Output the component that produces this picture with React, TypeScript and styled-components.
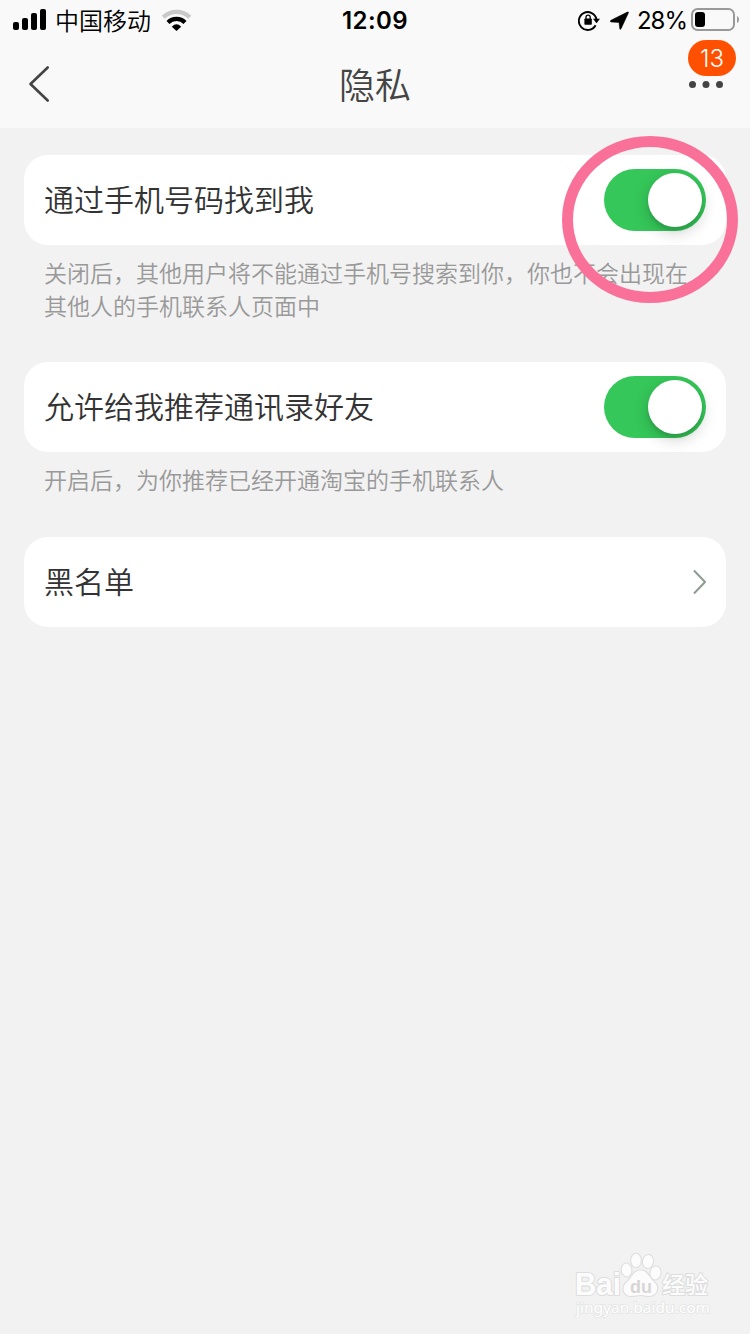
import React from "react";
import styled, { createGlobalStyle } from "styled-components";

const GlobalStyle = createGlobalStyle`
  * { box-sizing: border-box; }
  body {
    margin: 0;
    background: #f2f2f2;
    font-family: Inter, "Noto Sans CJK SC", sans-serif;
  }
`;

const Screen = styled.main`
  position: relative;
  width: 750px;
  height: 1334px;
  overflow: hidden;
  background: #f2f2f2;
`;

const Header = styled.header`
  height: 128px;
  background: #f9f9f9;
`;

const StatusBar = styled.div`
  display: grid;
  grid-template-columns: 1fr auto 1fr;
  align-items: center;
  height: 40px;
  padding: 0 11px 0 13px;
  color: #000;
`;

const StatusGroup = styled.div<{ $end?: boolean }>`
  display: flex;
  align-items: center;
  justify-content: ${(p) => (p.$end ? "flex-end" : "flex-start")};
  height: 40px;
  svg { display: block; flex: none; }
`;

const Carrier = styled.span`
  margin: 0 11px 0 8px;
  font: 350 24px/40px "Noto Sans CJK SC", sans-serif;
  white-space: nowrap;
`;

const Clock = styled.time`
  padding: 2px 2px 0 0;
  font: 600 24px/38px Inter, sans-serif;
  letter-spacing: 0.4px;
  white-space: nowrap;
`;

const Percent = styled.span`
  margin: 0 4px 0 8px;
  padding-top: 2px;
  font: 400 24px/38px Inter, sans-serif;
  letter-spacing: -1px;
`;

const NavBar = styled.nav`
  display: grid;
  grid-template-columns: 1fr auto 1fr;
  align-items: center;
  height: 88px;
  padding: 0 27px;
`;

const NavButton = styled.button<{ $end?: boolean }>`
  position: relative;
  justify-self: ${(p) => (p.$end ? "end" : "start")};
  display: flex;
  padding: 0;
  border: 0;
  background: none;
`;

const Title = styled.h1`
  margin: 0;
  padding-bottom: 2px;
  color: #444;
  font: 350 36px/86px "Noto Sans CJK SC", sans-serif;
`;

const Badge = styled.span`
  position: absolute;
  right: -13px;
  bottom: 12px;
  width: 48px;
  height: 36px;
  border-radius: 18px;
  background: #ff5000;
  color: #fff;
  font: 350 24px/38px Inter, sans-serif;
  text-align: center;
`;

const Content = styled.div`
  padding: 27px 24px 0;
`;

const Section = styled.section<{ $gap?: number }>`
  margin-bottom: ${(p) => p.$gap ?? 0}px;
`;

const Card = styled.div`
  display: flex;
  align-items: center;
  justify-content: space-between;
  height: 90px;
  padding: 0 20px;
  border-radius: 24px;
  background: #fff;
`;

const Label = styled.span`
  padding-bottom: 4px;
  color: #333;
  font: 350 30px/44px "Noto Sans CJK SC", sans-serif;
`;

const Hint = styled.p`
  margin: 0;
  padding: 11px 20px 1px;
  color: #999;
  font: 350 23px/33px "Noto Sans CJK SC", sans-serif;
  white-space: nowrap;
`;

const Track = styled.button`
  display: flex;
  justify-content: flex-end;
  width: 102px;
  height: 62px;
  padding: 4px;
  border: 0;
  border-radius: 31px;
  background: #35c759;
`;

const Knob = styled.span`
  width: 54px;
  height: 54px;
  border-radius: 50%;
  background: #fff;
  box-shadow: 0 5px 16px rgba(0, 0, 0, 0.2), 0 4px 3px rgba(0, 0, 0, 0.08);
`;

const Highlight = styled.div`
  position: absolute;
  left: 562px;
  top: 136px;
  width: 176px;
  height: 167px;
  border: 11px solid #f97099;
  border-radius: 50%;
  pointer-events: none;
`;

const Watermark = styled.div`
  position: absolute;
  left: 574px;
  top: 1250px;
  svg { display: block; }
`;

const SignalIcon = () => (
  <svg width="34" height="40" viewBox="0 0 34 40">
    <rect x="0" y="22" width="6" height="8" rx="2" />
    <rect x="9" y="18" width="6" height="12" rx="2" />
    <rect x="18" y="13" width="6" height="17" rx="2" />
    <rect x="27" y="9" width="6" height="21" rx="2" />
  </svg>
);

const WifiIcon = () => (
  <svg width="30" height="40" viewBox="0 0 30 40">
    <g fill="none" strokeWidth="4.2">
      <path d="M1.2 17.3A19.2 19.2 0 0 1 27.8 17.3" stroke="#c9c9c9" />
      <path d="M6 22.4A12 12 0 0 1 23 22.4" stroke="#000" />
    </g>
    <path d="M9.8 26.7Q14.5 22 19.2 26.7L14.5 31Z" />
  </svg>
);

const RotationLockIcon = () => (
  <svg width="22" height="40" viewBox="0 0 22 40">
    <path d="M17.6 25.2A8.9 8.9 0 1 1 18.5 19.5" fill="none" stroke="#000" strokeWidth="1.9" />
    <path d="M15 18.8H22L18.5 23.2Z" />
    <rect x="6.4" y="18.4" width="7.4" height="6.4" rx="0.8" />
    <path d="M8 19V17.2a2.1 2.1 0 0 1 4.2 0V19" fill="none" stroke="#000" strokeWidth="1.3" />
  </svg>
);

const LocationIcon = () => (
  <svg width="19" height="40" viewBox="0 0 19 40">
    <path d="M18.4 12.9L11.2 28.5Q10 30.4 9.7 28.4L9 22.4L1.4 22.1Q-1 21.4 1 20.2L17.3 12.1Q19 11.5 18.4 12.9Z" stroke="#000" strokeWidth=".5" />
  </svg>
);

const BatteryIcon = () => (
  <svg width="48" height="40" viewBox="0 0 48 40">
    <rect x="1" y="9" width="42" height="21" rx="5.5" fill="none" stroke="#999" strokeWidth="2" />
    <rect x="4" y="12" width="10" height="15" rx="3" />
    <path d="M46 16Q48 16.5 48 19.5T46 23Z" fill="#999" />
  </svg>
);

const IconPair = styled.span`
  display: flex;
  gap: 10px;
`;

const BackIcon = () => (
  <svg width="24" height="40" viewBox="0 0 24 40">
    <path d="M20.7 3.5L3.5 20L20.7 36.5" fill="none" stroke="#444" strokeWidth="2.6" strokeLinecap="round" strokeLinejoin="round" />
  </svg>
);

const MoreIcon = () => (
  <svg width="34" height="8" viewBox="0 0 34 8" fill="#444">
    <circle cx="3.5" cy="4.5" r="3.5" />
    <circle cx="17" cy="4.5" r="3.5" />
    <circle cx="30.5" cy="4.5" r="3.5" />
  </svg>
);

const ChevronIcon = () => (
  <svg width="14" height="26" viewBox="0 0 14 26">
    <path d="M2 1.5L13 13L2 24.5" fill="none" stroke="#8f9c94" strokeWidth="2" />
  </svg>
);

const BaiduMark = () => (
  <svg width="140" height="70" viewBox="0 0 140 70">
    <g fill="#fcfcfc" stroke="#dedede" strokeWidth="2.2" paintOrder="stroke" strokeLinejoin="round">
      <text x="1" y="45" fontFamily="Liberation Sans" fontWeight="700" fontSize="31" textLength="46" lengthAdjust="spacingAndGlyphs">Bai</text>
      <ellipse cx="52.5" cy="20" rx="4.8" ry="6.5" transform="rotate(-8 52.5 20)" />
      <ellipse cx="62" cy="10.5" rx="4.8" ry="6.7" />
      <ellipse cx="74" cy="11.5" rx="5" ry="6.5" transform="rotate(12 74 11.5)" />
      <ellipse cx="81.5" cy="23" rx="5" ry="6.5" transform="rotate(8 81.5 23)" />
      <path d="M66.5 20.5C74 20.5 75 28 81 33C86 38 82 46 75 46C71 46 70 45 66.5 45C63 45 61 46 57 46C50 46 47 38 52 33C58 28 59 20.5 66.5 20.5Z" />
      <text x="88" y="42.5" fontFamily="Noto Sans CJK SC" fontWeight="500" fontSize="23" textLength="46">经验</text>
    </g>
    <text x="56" y="42.5" fontFamily="Liberation Sans" fontWeight="700" fontSize="19" fill="#d6d6d6" textLength="22" lengthAdjust="spacingAndGlyphs">du</text>
    <text x="2" y="63" fontFamily="Noto Sans" fontSize="14.5" fill="#fff" stroke="#e4e4e4" strokeWidth="1.4" paintOrder="stroke" textLength="134" lengthAdjust="spacingAndGlyphs">jingyan.baidu.com</text>
  </svg>
);

const Switch = ({ label }: { label: string }) => (
  <Track type="button" role="switch" aria-checked="true" aria-label={label}>
    <Knob />
  </Track>
);

export default function App() {
  return (
    <>
      <GlobalStyle />
      <Screen>
        <Header>
          <StatusBar>
            <StatusGroup>
              <SignalIcon />
              <Carrier>中国移动</Carrier>
              <WifiIcon />
            </StatusGroup>
            <Clock>12:09</Clock>
            <StatusGroup $end>
              <IconPair>
                <RotationLockIcon />
                <LocationIcon />
              </IconPair>
              <Percent>28%</Percent>
              <BatteryIcon />
            </StatusGroup>
          </StatusBar>
          <NavBar>
            <NavButton type="button" aria-label="返回">
              <BackIcon />
            </NavButton>
            <Title>隐私</Title>
            <NavButton type="button" aria-label="更多" $end>
              <MoreIcon />
              <Badge>13</Badge>
            </NavButton>
          </NavBar>
        </Header>
        <Content>
          <Section $gap={39}>
            <Card>
              <Label>通过手机号码找到我</Label>
              <Switch label="通过手机号码找到我" />
            </Card>
            <Hint>
              关闭后，其他用户将不能通过手机号搜索到你，你也不会出现在
              <br />
              其他人的手机联系人页面中
            </Hint>
          </Section>
          <Section $gap={40}>
            <Card>
              <Label>允许给我推荐通讯录好友</Label>
              <Switch label="允许给我推荐通讯录好友" />
            </Card>
            <Hint>开启后，为你推荐已经开通淘宝的手机联系人</Hint>
          </Section>
          <Section>
            <Card>
              <Label>黑名单</Label>
              <ChevronIcon />
            </Card>
          </Section>
        </Content>
        <Highlight />
        <Watermark>
          <BaiduMark />
        </Watermark>
      </Screen>
    </>
  );
}
